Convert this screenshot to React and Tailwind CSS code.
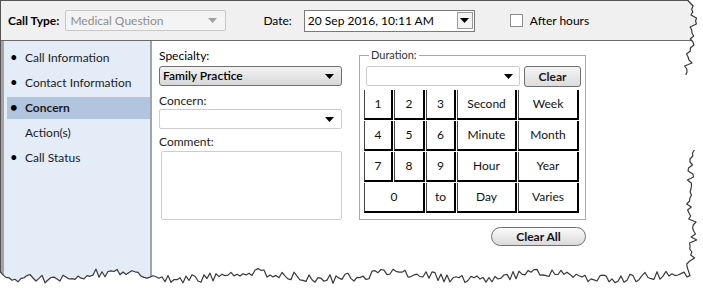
import React from "react"

const font = { fontFamily: 'Lato, "Noto Sans", sans-serif' }

// jagged torn-paper edge
const jit = (i, a) => {
    const s = Math.sin(i * 12.9898 + a * 78.233) * 43758.5453
    return s - Math.floor(s)
}

const buildEdge = () => {
    const right = []
    for (let y = 0; y <= 268; y += 3) {
        let base = 690
        if (y > 140) base = 694 - (y - 140) * 0.04
        const x = base + (jit(y, 1) - 0.5) * 8 + Math.sin(y / 17) * 3
        right.push([x, y])
    }
    const bottom = []
    for (let x = 690; x >= -3; x -= 3) {
        const y = 276 + (jit(x, 2) - 0.5) * 9 + Math.sin(x / 23) * 3
        bottom.push([x, y])
    }
    const pts = [...right, ...bottom]
    const toD = (arr) => arr.map((p, i) => (i ? "L" : "M") + p[0].toFixed(1) + " " + p[1].toFixed(1)).join(" ")
    const top = toD(right.filter((p) => p[1] <= 75))
    const rest = toD(pts.filter((p, i) => i >= right.length || p[1] >= 150))
    const fill = "M703 0 " + pts.map((p) => "L" + p[0].toFixed(1) + " " + p[1].toFixed(1)).join(" ") + " L-3 292 L703 292 Z"
    return { top, rest, fill }
}
const edge = buildEdge()

const Arrow = ({ color = "#000" }) => (
    <svg width="9" height="5" viewBox="0 0 9 5"><path d="M0 0 L9 0 L4.5 5 Z" fill={color} /></svg>
)

const NavItem = ({ label, bullet = true, active = false }) => (
    <div className={`flex items-center h-[22px] mb-[3px] ${active ? "bg-[#b1c5df] font-bold" : ""}`}>
        <span className="w-[18px] pl-[3px] text-[13px] text-black">{bullet ? "•" : ""}</span>
        <span className="text-[12px] text-[#1b1b1b]">{label}</span>
    </div>
)

const Key = ({ label, span = false }) => (
    <div className={`flex items-center justify-center bg-white border-l border-l-[#444] border-r-2 border-b-2 border-black text-[12px] text-[#111] ${span ? "col-span-2" : ""}`}>
        {label}
    </div>
)

export default function App() {
    const keys = [
        ["1"], ["2"], ["3"], ["Second"], ["Week"],
        ["4"], ["5"], ["6"], ["Minute"], ["Month"],
        ["7"], ["8"], ["9"], ["Hour"], ["Year"],
    ]
    return (
        <div className="relative w-[703px] h-[292px] bg-white overflow-hidden" style={font}>
            <div className="w-[700px] h-[290px] flex flex-col border-t border-l border-[#555]">
                <div className="h-[40px] shrink-0 bg-[#f0f0f0] border-b border-[#6b6b6b] flex items-center">
                    <span className="ml-[7px] text-[12px] font-bold text-black">Call Type:</span>
                    <div className="ml-[6px] w-[161px] h-[21px] border border-[#c8c8c8] rounded-[2px] bg-[#f4f4f4] flex items-center justify-between pl-[4px] pr-[8px]">
                        <span className="text-[12px] text-[#8d8d8d]">Medical Question</span>
                        <Arrow color="#a0a0a0" />
                    </div>
                    <span className="ml-[37px] text-[12px] text-black">Date:</span>
                    <div className="ml-[12px] w-[171px] h-[22px] border border-[#7a7a7a] bg-white flex items-center justify-between pl-[3px] pr-[1px]">
                        <span className="text-[12px] text-black">20 Sep 2016, 10:11 AM</span>
                        <div className="w-[16px] h-[17px] border border-[#9a9a9a] bg-[#f3f3f3] flex items-center justify-center">
                            <Arrow />
                        </div>
                    </div>
                    <div className="ml-[35px] w-[13px] h-[13px] border border-[#8e8e8e] bg-white" />
                    <span className="ml-[7px] text-[12px] text-black">After hours</span>
                </div>
                <div className="flex flex-1">
                    <div className="w-[151px] shrink-0 bg-[#e3ecf7] border-l-[3px] border-l-[#a4a4a4] border-r-[2px] border-r-[#a4a4a4] pt-[6px] pl-[3px]">
                        <NavItem label="Call Information" />
                        <NavItem label="Contact Information" />
                        <NavItem label="Concern" active />
                        <NavItem label="Action(s)" bullet={false} />
                        <NavItem label="Call Status" />
                    </div>
                    <div className="flex-1 bg-white flex">
                        <div className="w-[183px] ml-[7px] pt-[7px] flex flex-col">
                            <span className="text-[12px] text-black leading-[16px]">Specialty:</span>
                            <div className="mt-[2px] h-[20px] border border-[#6f6f6f] rounded-[3px] bg-gradient-to-b from-[#f3f3f3] to-[#d8d8d8] flex items-center justify-between pl-[3px] pr-[7px]">
                                <span className="text-[12px] font-semibold text-black">Family Practice</span>
                                <Arrow />
                            </div>
                            <span className="mt-[7px] text-[12px] text-[#222] leading-[16px]">Concern:</span>
                            <div className="mt-[0px] h-[20px] border border-[#cdcdcd] rounded-[2px] bg-white flex items-center justify-end pr-[7px]">
                                <Arrow />
                            </div>
                            <span className="mt-[5px] text-[12px] text-[#222] leading-[16px]">Comment:</span>
                            <div className="mt-[1px] ml-[2px] w-[181px] h-[69px] border border-[#c9ced6] rounded-[2px] bg-white" />
                        </div>
                        <div className="ml-[17px] pt-[8px] flex flex-col items-end">
                            <fieldset className="w-[225px] border border-[#a8a8a8] px-[4px] pb-[6px] pt-[2px]">
                                <legend className="ml-[5px] px-[2px] text-[11px] text-[#333] leading-[12px]">Duration:</legend>
                                <div className="flex gap-[4px] mt-[3px] ml-[2px]">
                                    <div className="w-[154px] h-[20px] border border-[#cdcdcd] rounded-[2px] bg-white flex items-center justify-end pr-[6px]">
                                        <Arrow />
                                    </div>
                                    <div className="w-[57px] h-[21px] border border-[#707070] rounded-[3px] bg-gradient-to-b from-[#f4f4f4] to-[#dcdcdc] flex items-center justify-center text-[12px] font-bold text-[#1a1a1a]">
                                        Clear
                                    </div>
                                </div>
                                <div className="mt-[3px] grid grid-cols-[29px_31px_30px_60px_61px] grid-rows-[30px_30px_30px_30px] gap-[1px]">
                                    {keys.map(([k]) => <Key key={k} label={k} />)}
                                    <Key label="0" span />
                                    <Key label="to" />
                                    <Key label="Day" />
                                    <Key label="Varies" />
                                </div>
                            </fieldset>
                            <div className="mt-[7px] w-[95px] h-[19px] border border-[#707070] rounded-full bg-gradient-to-b from-[#fbfbfb] to-[#dadada] flex items-center justify-center text-[12px] font-bold text-[#111]">
                                Clear All
                            </div>
                        </div>
                    </div>
                </div>
            </div>
            <svg className="absolute inset-0 pointer-events-none" width="703" height="292" viewBox="0 0 703 292">
                <path d={edge.fill} fill="#fff" />
                <path d={edge.top} fill="none" stroke="#3a3a3a" strokeWidth="1.2" strokeLinejoin="round" />
                <path d={edge.rest} fill="none" stroke="#3a3a3a" strokeWidth="1.2" strokeLinejoin="round" />
            </svg>
        </div>
    )
}
